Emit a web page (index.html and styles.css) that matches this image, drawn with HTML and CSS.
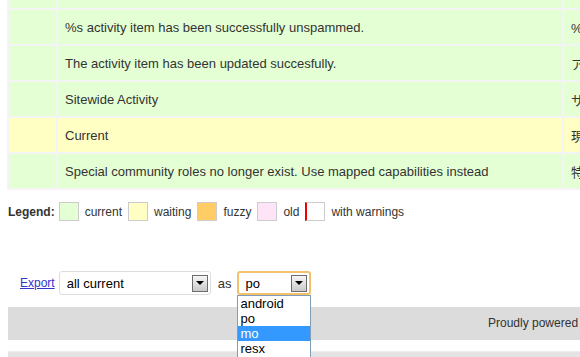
FILE: index.html
```html
<!DOCTYPE html>
<html lang="en">
<head>
    <meta charset="UTF-8">
    <title>Translations</title>
    <link rel="stylesheet" href="styles.css">
</head>
<body>
    <div class="page">
        <table class="translations">
            <tr class="current">
                <td class="check"></td>
                <td class="orig">Activity item has been successfully deleted.</td>
                <td class="trans">アクティビティ項目を削除しました。</td>
            </tr>
            <tr class="current">
                <td class="check"></td>
                <td class="orig">%s activity item has been successfully unspammed.</td>
                <td class="trans">%s 件のアクティビティ項目をスパム解除しました。</td>
            </tr>
            <tr class="current">
                <td class="check"></td>
                <td class="orig">The activity item has been updated succesfully.</td>
                <td class="trans">アクティビティ項目を更新しました。</td>
            </tr>
            <tr class="current">
                <td class="check"></td>
                <td class="orig">Sitewide Activity</td>
                <td class="trans">サイト全体のアクティビティ</td>
            </tr>
            <tr class="waiting">
                <td class="check"></td>
                <td class="orig">Current</td>
                <td class="trans">現在</td>
            </tr>
            <tr class="current">
                <td class="check"></td>
                <td class="orig">Special community roles no longer exist. Use mapped capabilities instead</td>
                <td class="trans">特別なコミュニティ権限は廃止されました。</td>
            </tr>
        </table>

        <div class="legend">
            <strong>Legend:</strong>
            <span class="swatch current"></span><span class="label">current</span>
            <span class="swatch waiting"></span><span class="label">waiting</span>
            <span class="swatch fuzzy"></span><span class="label">fuzzy</span>
            <span class="swatch old"></span><span class="label">old</span>
            <span class="swatch warnings"></span><span class="label">with warnings</span>
        </div>

        <div class="export">
            <a href="#">Export</a>
            <div class="select what">
                <span>all current</span>
                <span class="arrow"></span>
            </div>
            <span class="as">as</span>
            <div class="select format focused">
                <span>po</span>
                <span class="arrow"></span>
                <ul class="options">
                    <li>android</li>
                    <li>po</li>
                    <li class="hover">mo</li>
                    <li>resx</li>
                    <li>strings</li>
                </ul>
            </div>
        </div>

        <div class="footer">Proudly powered by GlotPress</div>
        <div class="footer-bottom"></div>
    </div>
</body>
</html>
```

FILE: styles.css
```css
body {
    margin: 0;
    overflow: hidden;
    font-family: "Liberation Sans", Arial, "Noto Sans CJK JP", sans-serif;
    font-size: 12px;
    color: #333;
}
.page {
    width: 1100px;
    margin: -28px 0 0 8px;
}
.translations {
    border-collapse: separate;
    border-spacing: 2px;
    margin-left: -1px;
    background: #f4f4f4;
    font-size: 13px;
}
.translations td {
    height: 34px;
    padding: 0 7px;
    vertical-align: middle;
    white-space: nowrap;
}
.translations .check {
    width: 33px;
}
.translations .orig {
    width: 490px;
}
.translations .trans {
    width: 400px;
}
tr.current td {
    background-color: #e4ffd4;
}
tr.waiting td {
    background-color: #ffffc4;
}

.legend {
    display: flex;
    align-items: center;
    margin-top: 12px;
    height: 19px;
}
.legend strong {
    margin-right: 4px;
}
.legend .swatch {
    width: 18px;
    height: 17px;
    border: 1px solid #ccc;
}
.legend .label {
    margin: 0 6px 0 6px;
}
.swatch.current {
    background: #e4ffd4;
}
.swatch.waiting {
    background: #ffffc4;
}
.swatch.fuzzy {
    background: #ffcc66;
}
.swatch.old {
    background: #fde4f6;
}
.swatch.warnings {
    width: 17px;
    background: #fff;
    border-left: 2px solid #e00;
}

.export {
    display: flex;
    align-items: center;
    margin-top: 50px;
    padding-left: 12px;
    height: 24px;
}
.export a {
    color: #3333cc;
    margin-right: 4px;
}
.select {
    position: relative;
    box-sizing: border-box;
    display: flex;
    align-items: center;
    justify-content: space-between;
    height: 24px;
    padding: 0 2px 0 7px;
    border: 1px solid #ddd;
    border-radius: 3px;
    background: #fff;
    color: #000;
    font-size: 13px;
}
.select.what {
    width: 152px;
}
.as {
    margin: 0 6px 0 7px;
    font-size: 13px;
}
.select.format {
    width: 74px;
    border: 2px solid #f1c26b;
    padding-left: 6px;
}
.arrow {
    box-sizing: border-box;
    width: 16px;
    height: 17px;
    border: 1px solid #6d6d6d;
    background: linear-gradient(#f6f6f6, #c9c9c9);
    display: flex;
    align-items: center;
    justify-content: center;
}
.arrow::after {
    content: "";
    border-left: 4px solid transparent;
    border-right: 4px solid transparent;
    border-top: 4px solid #000;
}
.options {
    position: absolute;
    top: 22px;
    left: -2px;
    z-index: 2;
    width: 72px;
    margin: 0;
    padding: 0;
    list-style: none;
    background: #fff;
    border: 1px solid #7f9db9;
}
.options li {
    height: 15px;
    line-height: 15px;
    padding-left: 2px;
    font-size: 13px;
}
.options li.hover {
    background: #3399ff;
    color: #fff;
}

.footer {
    margin-top: 12px;
    height: 33px;
    line-height: 33px;
    background: #dcdcdc;
    padding-left: 480px;
}
.footer-bottom {
    margin-top: 11px;
    height: 20px;
    background: #e4e4e4;
    border-top: 1px solid #ececec;
}
```
